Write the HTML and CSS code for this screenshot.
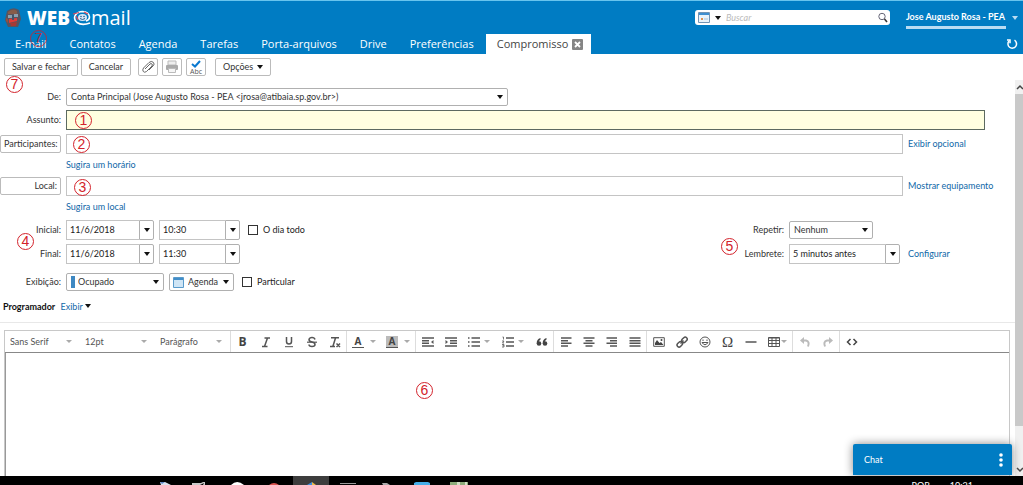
FILE: index.html
```html
<!DOCTYPE html>
<html lang="pt-BR">
<head>
<meta charset="utf-8">
<title>Webmail - Compromisso</title>
<link rel="stylesheet" href="styles.css">
</head>
<body>
<header class="header">
  <div class="brand-row">
    <div class="brand">
      <svg class="crest" width="16" height="20" viewBox="0 0 16 20" aria-hidden="true"><path d="M2 3Q8-2 14 2L16 11 13 19H3L0 12Z" fill="#58545f"/><path d="M3 4Q8 0 12 3V6H3Z" fill="#875c49"/><path d="M3 7h4v3H3zM9 6h4v3H9z" fill="#8da0ae"/><path d="M4 11l8-1v3l-8 2z" fill="#e33a35"/><path d="M5 15l7-1-1 4H6z" fill="#a73935"/><path d="M7 7h2v5H7z" fill="#43556c"/><path d="M1 10l2 1v4L1 13z" fill="#95503f"/></svg>
      <span class="logo-web">WEB</span>
      <svg class="logo-at" width="18" height="16" viewBox="0 0 18 16" fill="none" aria-hidden="true"><path d="M17 13Q9 16 4 12.500Q0 9 2.500 5Q5 1.500 9.500 1.500Q16 2 16.500 7Q16.500 10 13 11" stroke="#fff" stroke-width="1.600"/><ellipse cx="9.500" cy="7.500" rx="4.500" ry="3.500" fill="#d8e6f4"/><circle cx="8" cy="6.500" r=".8" fill="#245e95"/><circle cx="11" cy="6.500" r=".8" fill="#245e95"/><path d="M7 8.500Q9.500 10.500 12 8.500" stroke="#245e95"/><path d="M0 4l6-1.500M11 2l4 2M3 6l2 4" stroke="#d9475a" stroke-width="1.200"/></svg>
      <span class="logo-mail">mail</span>
    </div>
    <form class="search" role="search">
      <button type="button" class="search-type" aria-label="Tipo de busca">
        <svg width="12" height="11" viewBox="0 0 12 11"><path d="M.5.500h11v10H.5z" fill="#e9f3fb" stroke="#7294b4"/><path d="M1 1h10v2H1z" fill="#3f8fd0"/><path d="M3 6h2v2H3z" fill="#df9150"/><path d="M6 7h4" stroke="#a8c5dc"/></svg>
        <span class="caret"></span>
      </button>
      <input class="search-input" type="search" placeholder="Buscar" aria-label="Buscar">
      <button type="button" class="search-go" aria-label="Pesquisar"><svg width="10" height="11" viewBox="0 0 10 11" fill="none"><circle cx="4" cy="4.500" r="3.200" stroke="#667"/><path d="M6.500 7L9 10" stroke="#333" stroke-width="1.600"/></svg></button>
    </form>
    <button type="button" class="account"><span class="account-name">Jose Augusto Rosa - PEA</span><span class="caret caret-light"></span></button>
  </div>
  <nav class="tabs">
    <a class="tab" href="#email">E-mail</a>
    <a class="tab" href="#contatos">Contatos</a>
    <a class="tab" href="#agenda">Agenda</a>
    <a class="tab" href="#tarefas">Tarefas</a>
    <a class="tab" href="#porta">Porta-arquivos</a>
    <a class="tab" href="#drive">Drive</a>
    <a class="tab" href="#preferencias">Preferências</a>
    <div class="tab-active"><a class="tab-current" href="#compromisso">Compromisso</a><button type="button" class="tab-close" aria-label="Fechar"><svg width="11" height="11" viewBox="0 0 11 11"><rect width="11" height="11" rx="1" fill="#858585"/><path d="M3 3l5 5M8 3l-5 5" stroke="#fff" stroke-width="1.800"/></svg></button></div>
    <button type="button" class="refresh" aria-label="Atualizar"><svg width="12" height="12" viewBox="0 0 12 12" fill="none" stroke="#fff" stroke-width="1.500"><path d="M8.500 2.200A4.300 4.300 0 1 1 3 3"/><path d="M1 2h3v3.300"/></svg></button>
  </nav>
</header>

<div class="actions">
  <button type="button" class="btn">Salvar e fechar</button>
  <button type="button" class="btn">Cancelar</button>
  <div class="action-icons">
    <button type="button" class="btn btn-icon" aria-label="Anexar"><svg width="14" height="14" viewBox="0 0 14 14" fill="none" stroke="#666"><path d="M4 9l5-5q1.300-1 2 0t0 2L5.500 11.500Q3.500 13 2.300 11.500T2.500 8L8 2.500Q10.500.500 12.300 2.300T12 6L8 10"/></svg></button>
    <button type="button" class="btn btn-icon" aria-label="Imprimir"><svg width="14" height="14" viewBox="0 0 14 14"><path d="M3 1h8v4H3z" fill="#eee" stroke="#bbb"/><rect x="1" y="5" width="12" height="5" rx="1" fill="#aaa"/><path d="M3.500 8.500h7v4h-7z" fill="#f5f5f5" stroke="#bbb"/></svg></button>
    <button type="button" class="btn btn-icon btn-spell" aria-label="Verificar ortografia"><svg width="10" height="8" viewBox="0 0 10 8" fill="none"><path d="M1 4l3 2.500L9 1" stroke="#0b79d0" stroke-width="2"/></svg><span>Abc</span></button>
  </div>
  <button type="button" class="btn">Opções <span class="caret"></span></button>
</div>

<div class="workspace">
  <main class="main">
    <form class="form">
      <div class="row row-from"><label class="label" for="de">De:</label><select class="select select-from" id="de"><option>Conta Principal (Jose Augusto Rosa - PEA &lt;jrosa@atibaia.sp.gov.br&gt;)</option></select></div>
      <div class="row row-subject"><label class="label" for="assunto">Assunto:</label><input class="field field-focus" id="assunto" type="text"></div>
      <div class="row"><button type="button" class="btn btn-label">Participantes:</button><input class="field" type="text" aria-label="Participantes"><a class="side-link" href="#opcional">Exibir opcional</a></div>
      <div class="hint"><a href="#horario">Sugira um horário</a></div>
      <div class="row"><button type="button" class="btn btn-label">Local:</button><input class="field" type="text" aria-label="Local"><a class="side-link" href="#equipamento">Mostrar equipamento</a></div>
      <div class="hint"><a href="#local">Sugira um local</a></div>
      <div class="row row-start">
        <label class="label" for="inicial">Inicial:</label>
        <div class="combo combo-date"><input id="inicial" type="text" value="11/6/2018"><button type="button" aria-label="Escolher data inicial"><span class="caret"></span></button></div>
        <div class="combo combo-time"><input type="text" value="10:30" aria-label="Hora inicial"><button type="button" aria-label="Escolher hora inicial"><span class="caret"></span></button></div>
        <label class="check"><input type="checkbox">O dia todo</label>
        <div class="side-group"><label for="repetir">Repetir:</label><div class="side-field"><select class="select select-repeat" id="repetir"><option>Nenhum</option></select></div><span class="side-link"></span></div>
      </div>
      <div class="row">
        <label class="label" for="final">Final:</label>
        <div class="combo combo-date"><input id="final" type="text" value="11/6/2018"><button type="button" aria-label="Escolher data final"><span class="caret"></span></button></div>
        <div class="combo combo-time"><input type="text" value="11:30" aria-label="Hora final"><button type="button" aria-label="Escolher hora final"><span class="caret"></span></button></div>
        <div class="side-group"><label for="lembrete">Lembrete:</label><div class="side-field"><div class="combo combo-reminder"><input id="lembrete" type="text" value="5 minutos antes"><button type="button" aria-label="Escolher lembrete"><span class="caret"></span></button></div></div><a class="side-link" href="#configurar">Configurar</a></div>
      </div>
      <div class="row row-display">
        <label class="label" for="exibicao">Exibição:</label>
        <select class="select select-busy" id="exibicao"><option>Ocupado</option></select>
        <select class="select select-calendar" aria-label="Agenda"><option>Agenda</option></select>
        <label class="check"><input type="checkbox">Particular</label>
      </div>
      <div class="scheduler"><strong>Programador</strong> <a href="#exibir">Exibir</a><span class="caret"></span></div>
    </form>

    <section class="editor">
      <div class="editor-bar" role="toolbar" aria-label="Formatação">
        <div class="group">
          <select class="format" aria-label="Fonte"><option>Sans Serif</option></select>
          <select class="format" aria-label="Tamanho"><option>12pt</option></select>
          <select class="format" aria-label="Estilo"><option>Parágrafo</option></select>
        </div>
        <div class="group">
          <button type="button" class="tool"><b>B</b></button>
          <button type="button" class="tool" aria-label="Itálico"><svg width="12" height="12" viewBox="0 0 12 12" stroke="#555" fill="none" stroke-width="1.500"><path d="M4.500 2H10M2 10.500h5.500M7.500 2L4.500 10.500"/></svg></button>
          <button type="button" class="tool" aria-label="Sublinhado"><svg width="12" height="12" viewBox="0 0 12 12" stroke="#555" fill="none" stroke-width="1.500"><path d="M3.500 1v4.500a2.500 2.500 0 0 0 5 0V1"/><path d="M2 10.700h8" stroke-width="1"/></svg></button>
          <button type="button" class="tool" aria-label="Tachado"><svg width="12" height="12" viewBox="0 0 12 12" stroke="#555" fill="none" stroke-width="1.500"><path d="M9 3.500Q8.500 1.500 6 1.500T3 3.500Q3 5.500 6 6T9 8.500Q9 10.500 6 10.500T3 8.500"/><path d="M1 6.200h10" stroke-width="1.200"/></svg></button>
          <button type="button" class="tool" aria-label="Limpar formatação"><svg width="12" height="12" viewBox="0 0 12 12" stroke="#555" fill="none" stroke-width="1.500"><path d="M2 1.700h8M6.500 2L4 10M1 10.500h5M7.500 7.500l3.500 3.500M11 7.500L7.500 11"/></svg></button>
        </div>
        <div class="group">
          <button type="button" class="tool tool-wide"><span class="ink">A</span><span class="caret caret-gray"></span></button>
          <button type="button" class="tool tool-wide"><span class="ink ink-back">A</span><span class="caret caret-gray"></span></button>
        </div>
        <div class="group">
          <button type="button" class="tool" aria-label="Diminuir recuo"><svg width="12" height="12" viewBox="0 0 12 12" stroke="#555" fill="none" stroke-width="1.500"><path d="M0 2h12M0 4.700h7M0 7.300h7M0 10h12"/><path d="M11.500 4L9 6l2.500 2z" fill="#555" stroke="none"/></svg></button>
          <button type="button" class="tool" aria-label="Aumentar recuo"><svg width="12" height="12" viewBox="0 0 12 12" stroke="#555" fill="none" stroke-width="1.500"><path d="M0 2h12M5 4.700h7M5 7.300h7M0 10h12"/><path d="M.5 4L3 6 .5 8z" fill="#555" stroke="none"/></svg></button>
          <button type="button" class="tool tool-list" aria-label="Lista"><svg width="12" height="12" viewBox="0 0 12 12" stroke="#555" fill="none" stroke-width="1.500"><path d="M3.500 2H12M3.500 6H12M3.500 10H12M0 2h1.500M0 6h1.500M0 10h1.500"/></svg><span class="caret caret-gray"></span></button>
          <button type="button" class="tool tool-list" aria-label="Lista numerada"><svg width="12" height="12" viewBox="0 0 12 12" stroke="#555" fill="none" stroke-width="1.500"><path d="M4 2h8M4 6h8M4 10h8"/><path d="M.5 1h1v2.500M0 5h2L.5 7H2M0 8.500h2V11H0M.5 9.700H2" stroke-width=".8"/></svg><span class="caret caret-gray"></span></button>
          <button type="button" class="tool" aria-label="Citação"><svg width="12" height="12" viewBox="0 0 12 12" fill="#444"><circle cx="3" cy="7.500" r="2.300"/><circle cx="9" cy="7.500" r="2.300"/><path d="M.7 7.500Q.5 3 4.500 2v1.500Q2.500 4.500 2.500 7zM6.700 7.500Q6.500 3 10.500 2v1.500Q8.500 4.500 8.500 7z"/></svg></button>
        </div>
        <div class="group">
          <button type="button" class="tool" aria-label="Alinhar à esquerda"><svg width="12" height="12" viewBox="0 0 12 12" stroke="#555" stroke-width="1.500"><path d="M1 2h10.500M1 4.700h7M1 7.300h10.500M1 10h7"/></svg></button>
          <button type="button" class="tool" aria-label="Centralizar"><svg width="12" height="12" viewBox="0 0 12 12" stroke="#555" stroke-width="1.500"><path d="M.5 2h11M2.500 4.700h7M.5 7.300h11M2.500 10h7"/></svg></button>
          <button type="button" class="tool" aria-label="Alinhar à direita"><svg width="12" height="12" viewBox="0 0 12 12" stroke="#555" stroke-width="1.500"><path d="M.5 2H11M4 4.700h7M.5 7.300H11M4 10h7"/></svg></button>
          <button type="button" class="tool" aria-label="Justificar"><svg width="12" height="12" viewBox="0 0 12 12" stroke="#555" stroke-width="1.500"><path d="M.5 2h11M.5 4.700h11M.5 7.300h11M.5 10h11"/></svg></button>
        </div>
        <div class="group">
          <button type="button" class="tool" aria-label="Imagem"><svg width="12" height="12" viewBox="0 0 12 12"><path d="M.7 1.700h10.600v8.600H.7z" fill="#fff" stroke="#555"/><path d="M2 9V7l2-3 2.500 3L8 6l2.500 3z" fill="#444"/><circle cx="8.500" cy="4" r="1" fill="#444"/></svg></button>
          <button type="button" class="tool" aria-label="Link"><svg width="12" height="12" viewBox="0 0 12 12" fill="none" stroke="#555" stroke-width="1.500"><rect x="5.500" y="1.800" width="6" height="4" rx="2" transform="rotate(-45 8.500 3.800)"/><rect x=".8" y="6.300" width="6" height="4" rx="2" transform="rotate(-45 3.800 8.300)"/><path d="M4.500 7.500l3-3"/></svg></button>
          <button type="button" class="tool" aria-label="Emoticon"><svg width="12" height="12" viewBox="0 0 12 12" fill="none" stroke="#555"><circle cx="6" cy="6" r="5"/><path d="M3 6.500q3 4.500 6 0z"/><path d="M4 3.500V5M8 3.500V5"/></svg></button>
          <button type="button" class="tool tool-omega">Ω</button>
          <button type="button" class="tool" aria-label="Linha horizontal"><svg width="12" height="12" viewBox="0 0 12 12" stroke="#555" stroke-width="1.500"><path d="M.5 6h11"/></svg></button>
          <button type="button" class="tool tool-table" aria-label="Tabela"><svg width="12" height="12" viewBox="0 0 12 12" fill="none" stroke="#555"><path d="M.5 1.500h11v9H.5zM.5 2h11M.5 4.500h11M.5 7.500h11M4 2v8.500M8 2v8.500"/></svg><span class="caret caret-gray"></span></button>
        </div>
        <div class="group">
          <button type="button" class="tool" aria-label="Desfazer"><svg width="12" height="12" viewBox="0 0 12 12" fill="none" stroke="#bbb" stroke-width="2"><path d="M3 4.500h4q4 1 2 6"/><path d="M5 1v7L1 4.500z" fill="#bbb" stroke="none"/></svg></button>
          <button type="button" class="tool" aria-label="Refazer"><svg width="12" height="12" viewBox="0 0 12 12" fill="none" stroke="#bbb" stroke-width="2"><path d="M9 4.500H5q-4 1-2 6"/><path d="M7 1v7l4-3.500z" fill="#bbb" stroke="none"/></svg></button>
        </div>
        <div class="group">
          <button type="button" class="tool" aria-label="Código-fonte"><svg width="12" height="12" viewBox="0 0 12 12" fill="none" stroke="#444" stroke-width="1.500"><path d="M4.500 3L1.500 6l3 3M7.500 3l3 3-3 3"/></svg></button>
        </div>
      </div>
      <textarea class="editor-text" aria-label="Mensagem"></textarea>
    </section>
  </main>
  <div class="scrollbar" aria-hidden="true">
    <svg width="8" height="14" viewBox="0 0 8 14" fill="none" stroke="#444" stroke-width="1.500"><path d="M2 9l3-3 3 3"/></svg>
    <div class="thumb"></div>
    <svg width="8" height="14" viewBox="0 0 8 14" fill="none" stroke="#444" stroke-width="1.500"><path d="M2 6l3 3 3-3"/></svg>
  </div>
  <aside class="chat"><span>Chat</span><button type="button" class="chat-menu" aria-label="Opções do chat"><svg width="4" height="14" viewBox="0 0 4 14" fill="#fff"><circle cx="2" cy="2" r="1.800"/><circle cx="2" cy="7" r="1.800"/><circle cx="2" cy="12" r="1.800"/></svg></button></aside>
</div>

<footer class="taskbar">
  <svg width="480" height="9" viewBox="0 0 480 9" aria-hidden="true"><path d="M293 0h36v9h-36z" fill="#3d3d3d"/><path d="M160 6h5l6 3h-10z" fill="#dce3ee"/><path d="M160 6h5l-3 2z" fill="#5b86c8"/><path d="M192 7h9l2-1h2v3h-2l1-2-4 2h-8z" fill="#c8c8c8"/><path d="M231 9q6-6 13 0z" fill="#fff"/><path d="M269 9q5-4 10 0z" fill="#d9534f"/><path d="M307 9l5-3v3z" fill="#3e8de0"/><path d="M312 6l4 3h-4z" fill="#e9bc4a"/><path d="M340 7h16v1h-16z" fill="#999"/><path d="M382 7h5l3 2h-7z" fill="#aaa"/><path d="M414 9V7l2-1h12l2 1v2z" fill="#44aee8"/><path d="M450 6h18v3h-18z" fill="#8dac7b"/><path d="M457 6h3v3h-3zM465 6h2v3h-2z" fill="#d3dfc7"/></svg>
  <span class="taskbar-lang">POR</span><span class="taskbar-time">10:21</span>
</footer>

<span class="mark mark-tab">7</span>
<span class="mark mark-7">7</span>
<span class="mark mark-1">1</span>
<span class="mark mark-2">2</span>
<span class="mark mark-3">3</span>
<span class="mark mark-4">4</span>
<span class="mark mark-5">5</span>
<span class="mark mark-6">6</span>
</body>
</html>
```
FILE: styles.css
```css
* { box-sizing: border-box; }
html { height: 100%; }
body {
  margin: 0;
  height: 100%;
  position: relative;
  display: flex;
  flex-direction: column;
  overflow: hidden;
  background: #fff;
  color: #333;
  font: 9px/12px Lato, "Open Sans", sans-serif;
}
button, input, select, textarea { font: inherit; color: inherit; margin: 0; padding: 0; }
button { border: 0; background: none; cursor: pointer; }
svg { display: block; flex: none; }
a { color: #0f68a8; text-decoration: none; }

.caret {
  display: inline-block;
  flex: none;
  border: 3px solid transparent;
  border-top: 4px solid #111;
  border-bottom: 0;
}
.caret-light { border-top-color: #b9dcf3; }
.caret-gray { border-top: 3px solid #aaa; }

/* Header */
.header { flex: none; background: #007cc3; border-top: 1px solid #68c4ee; color: #fff; }
.brand-row { display: flex; align-items: center; height: 33px; padding: 0 5px; }
.brand { display: flex; align-items: center; flex: 1; }
.logo-web { margin-left: 6px; font: 800 19px/24px "Open Sans", sans-serif; }
.logo-at { margin-left: 3px; }
.logo-mail { font: 20px/24px "Open Sans", sans-serif; }
.search { display: flex; align-items: center; width: 195px; height: 15px; padding: 0 2px 0 3px; background: #fff; border-radius: 3px; }
.search-type { display: flex; align-items: center; gap: 5px; }
.search-input { flex: 1; min-width: 0; margin-left: 5px; border: 0; background: none; color: #333; font-style: italic; outline: 0; appearance: none; }
.search-input::placeholder { color: #bbb; opacity: 1; }
.account { display: flex; align-items: center; gap: 6px; margin-left: 16px; color: #fff; font-weight: bold; }
.account-name { padding: 4px 1px 3px 0; border-bottom: 3px solid #b9dcf3; }
.tabs { display: flex; align-items: flex-end; height: 20px; padding: 0 5px 0 4px; font: 11px/20px "Open Sans", sans-serif; }
.tab { padding: 0 12px 0 11px; color: #fff; }
.tab-active { display: flex; align-items: center; gap: 4px; padding: 0 8px 0 11px; background: #fff; }
.tab-current { color: #444; }
.refresh { margin: 0 0 4px auto; }

/* Action bar */
.actions { display: flex; align-items: center; flex: none; gap: 3px; height: 26px; padding: 0 4px; }
.btn { height: 18px; padding: 0 7px; border: 1px solid #bbb; border-radius: 2px; background: #fff; color: #333; white-space: nowrap; }
.actions .caret { margin: 0 0 1px 1px; }
.action-icons { display: flex; gap: 4px; margin: 0 6px 0 4px; }
.btn-icon { display: flex; flex-direction: column; align-items: center; justify-content: center; width: 20px; padding: 0; }
.btn-spell { font: 7px/7px "Open Sans", sans-serif; color: #555; }

/* Form */
.workspace { display: flex; flex: 1; min-height: 0; position: relative; }
.main { display: flex; flex-direction: column; flex: 1; min-width: 0; }
.form { padding-top: 8px; }
.row { display: flex; align-items: center; gap: 5px; height: 20px; margin-bottom: 4px; }
.row-from { height: 18px; }
.row-subject { padding-right: 30px; }
.label { width: 61px; flex: none; text-align: right; }
.btn-label { width: 61px; flex: none; padding: 0 3px; text-align: right; }
.field { flex: 1; min-width: 0; height: 20px; padding: 0 4px; border: 1px solid #c4c4c4; outline: 0; background: #fff; }
.field-focus { border: 1px solid #5c6a60; background: #ffffe0; }
.side-link { width: 107px; flex: none; }
.hint { height: 18px; padding-left: 66px; line-height: 14px; }
.select, .format {
  appearance: none;
  height: 18px;
  border: 1px solid #b0b0b0;
  border-radius: 2px;
  padding: 0 16px 0 4px;
  background: #fff url("data:image/svg+xml,%3Csvg xmlns='http://www.w3.org/2000/svg' width='6' height='4'%3E%3Cpath d='M0 0h6L3 4z' fill='%23111'/%3E%3C/svg%3E") no-repeat right 4px center;
}
.select-from { width: 442px; }
.row-start { margin-top: 2px; }
.combo { display: flex; height: 20px; }
.combo input { flex: 1; min-width: 0; padding: 0 3px; border: 1px solid #c4c4c4; border-right: 0; color: #222; }
.combo button { display: flex; align-items: center; justify-content: center; width: 15px; border: 1px solid #b0b0b0; border-radius: 0 2px 2px 0; background: #fff; }
.combo-date { width: 88px; }
.combo-time { width: 81px; }
.combo-reminder { width: 111px; }
.check { display: flex; align-items: center; gap: 5px; margin-left: 3px; color: #222; }
.check input { appearance: none; width: 10px; height: 10px; border: 1px solid #333; background: #fff; }
.side-group { display: flex; align-items: center; gap: 5px; margin-left: auto; }
.side-field { width: 114px; }
.select-repeat { width: 84px; }
.row-display { margin-top: 8px; }
.select-busy {
  width: 98px;
  padding-left: 11px;
  background-image: url("data:image/svg+xml,%3Csvg xmlns='http://www.w3.org/2000/svg' width='6' height='4'%3E%3Cpath d='M0 0h6L3 4z' fill='%23111'/%3E%3C/svg%3E"), linear-gradient(#3e88c2, #3e88c2);
  background-position: right 4px center, 4px center;
  background-size: auto, 4px 12px;
}
.select-calendar {
  width: 65px;
  padding: 0 12px 0 18px;
  background-image: url("data:image/svg+xml,%3Csvg xmlns='http://www.w3.org/2000/svg' width='6' height='4'%3E%3Cpath d='M0 0h6L3 4z' fill='%23111'/%3E%3C/svg%3E"), url("data:image/svg+xml,%3Csvg xmlns='http://www.w3.org/2000/svg' width='11' height='11'%3E%3Cpath d='M.5.5h10v10H.5z' fill='%23cfe5f5' stroke='%235a9bcb'/%3E%3Cpath d='M1 1h9v2H1z' fill='%23418ec9'/%3E%3C/svg%3E");
  background-position: right 4px center, 3px center;
}
.scheduler { padding: 4px 3px 8px; border-bottom: 1px solid #e8e8e8; line-height: 14px; color: #111; }
.scheduler a { margin-left: 3px; }
.scheduler .caret { margin: 0 0 2px 2px; }

/* Editor */
.editor { display: flex; flex-direction: column; flex: 1; min-height: 0; margin: 7px 5px 0 4px; border: 1px solid #c8c8c8; border-bottom: 0; }
.editor-bar { display: flex; height: 22px; border-bottom: 1px solid #888; color: #555; }
.group { display: flex; align-items: center; border-right: 1px solid #ddd; }
.group:last-child { border-right: 0; }
.format { width: 75px; padding-left: 5px; border: 0; color: #555; background-image: url("data:image/svg+xml,%3Csvg xmlns='http://www.w3.org/2000/svg' width='6' height='3'%3E%3Cpath d='M0 0h6L3 3z' fill='%23aaa'/%3E%3C/svg%3E"); background-position: right 8px center; }
.tool { display: flex; align-items: center; justify-content: center; width: 23px; height: 20px; color: #444; font: 12px/14px "Open Sans", sans-serif; }
.tool-wide { width: 34px; gap: 6px; }
.tool-list { width: 34px; gap: 4px; }
.tool-table { width: 30px; gap: 1px; }
.tool-omega { font: 15px/16px "Liberation Serif", serif; }
.ink { width: 12px; border-bottom: 1px solid #555; font: bold 10px/11px "Open Sans", sans-serif; text-align: center; }
.ink-back { background: #bbb; }
.editor-text { flex: 1; width: 100%; border: 0; border-left: 1px solid #999; outline: 0; resize: none; padding: 4px; }

.scrollbar { display: flex; flex-direction: column; width: 8px; flex: none; background: #f0f0f0; }
.thumb { flex: 1; margin-bottom: 36px; background: #c9c9c9; }

/* Chat dock, floating over the editor */
.chat { position: absolute; right: 11px; bottom: 1px; display: flex; align-items: center; justify-content: space-between; width: 159px; height: 31px; padding: 0 9px 0 11px; border-radius: 2px 2px 0 0; background: #007cc3; color: #fff; box-shadow: 0 0 10px #888; }

/* Taskbar, showing only its upper edge */
.taskbar { display: flex; flex: none; height: 9px; padding-right: 50px; overflow: hidden; background: #000; color: #fff; line-height: 14px; position: relative; }
.taskbar-lang { margin: 3px 20px 0 auto; }
.taskbar-time { margin-top: 3px; }

/* Numbered callouts, pinned over the interface */
.mark { position: absolute; width: 17px; height: 17px; border: 1px solid #d3222b; border-radius: 50%; color: #d3222b; font: 14px/15px "Liberation Sans", sans-serif; text-align: center; pointer-events: none; }
.mark-tab { left: 30px; top: 30px; opacity: 0.8; }
.mark-7 { left: 6px; top: 76px; }
.mark-1 { left: 75px; top: 112px; }
.mark-2 { left: 73px; top: 136px; }
.mark-3 { left: 74px; top: 179px; }
.mark-4 { left: 17px; top: 233px; }
.mark-5 { left: 721px; top: 238px; }
.mark-6 { left: 416px; top: 382px; }
```
